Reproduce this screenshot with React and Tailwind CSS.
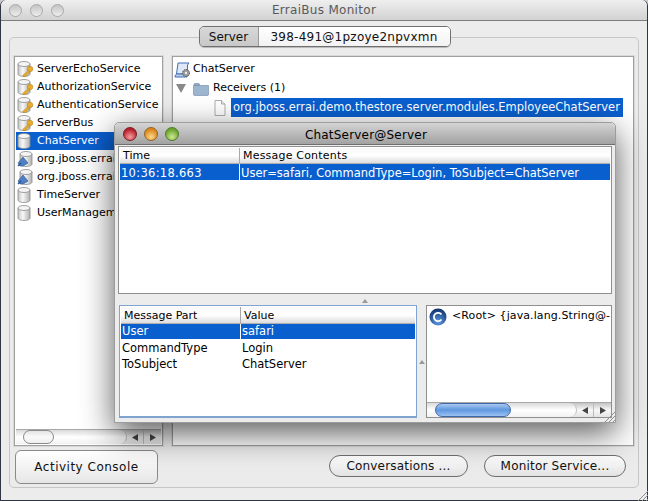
import React from "react";

const FONT = "font-['DejaVu_Sans',sans-serif]";

const services = [
  { name: "ServerEchoService", icon: "key" },
  { name: "AuthorizationService", icon: "key" },
  { name: "AuthenticationService", icon: "key" },
  { name: "ServerBus", icon: "key" },
  { name: "ChatServer", icon: "db", selected: true },
  { name: "org.jboss.errai.bus.client", icon: "plug" },
  { name: "org.jboss.errai.bus.server", icon: "plug" },
  { name: "TimeServer", icon: "db" },
  { name: "UserManagementService", icon: "db" },
];

function Cylinder() {
  return (
    <>
      <path d="M2 4v10c0 1.500 2.700 2.500 6 2.500s6-1 6-2.500V4z" fill="url(#cyl)" stroke="#8a8a8a" strokeWidth="0.8" />
      <ellipse cx="8" cy="4" rx="6" ry="2.500" fill="#f4f4f4" stroke="#8a8a8a" strokeWidth="0.8" />
    </>
  );
}

function ServiceIcon({ type }) {
  return (
    <svg width="18" height="18" viewBox="0 0 18 18" className="shrink-0">
      <defs>
        <linearGradient id="cyl" x1="0" x2="1" y1="0" y2="0">
          <stop offset="0" stopColor="#c4c4c4" />
          <stop offset="0.4" stopColor="#f8f8f8" />
          <stop offset="1" stopColor="#b0b0b0" />
        </linearGradient>
      </defs>
      {type === "plug" ? (
        <g transform="translate(2 0)">
          <Cylinder />
          <path d="M0 13l5-6 5 6-3 2-2 1H2z" fill="#4f7fc4" stroke="#2c558f" strokeWidth="0.6" />
          <path d="M0 16l3-3" stroke="#2c558f" strokeWidth="1.500" />
        </g>
      ) : (
        <Cylinder />
      )}
      {type === "key" && (
        <g fill="#e8ad2e" stroke="#b07a10" strokeWidth="0.5">
          <circle cx="14" cy="9" r="2.800" />
          <path d="M12.500 10.500l-6 5 1.500 1.500 1.200-1 .8.600 1-1-.5-.8 3.500-3z" />
        </g>
      )}
    </svg>
  );
}

function ScrollIcon() {
  return (
    <svg width="18" height="18" viewBox="0 0 18 18" className="shrink-0">
      <path d="M4 2h11l-1.500 2v9H2.500z" fill="#dfe8f6" stroke="#3f6fb5" strokeWidth="1" />
      <path d="M1 16c0-2 1-3 2-3h8c1 0 2 1 2 3z" fill="#b9cdea" stroke="#3f6fb5" strokeWidth="1" />
      <circle cx="12" cy="12" r="3.500" fill="#9a9a9a" stroke="#555" strokeWidth="1" strokeDasharray="1.500 0.800" />
      <circle cx="12" cy="12" r="1.200" fill="#eee" />
    </svg>
  );
}

function FolderIcon() {
  return (
    <svg width="16" height="14" viewBox="0 0 16 14" className="shrink-0">
      <path d="M1 3.500V2.500C1 2 1.500 1.500 2 1.500h4l1 2z" fill="#8fa9c4" stroke="#6e8aa6" strokeWidth="0.6" />
      <path d="M.5 3.500h15v9c0 .5-.4 1-1 1h-13c-.6 0-1-.5-1-1z" fill="#9db6d0" stroke="#6e8aa6" strokeWidth="0.6" />
    </svg>
  );
}

function DocIcon() {
  return (
    <svg width="12" height="16" viewBox="0 0 12 16" className="shrink-0">
      <path d="M1 .5h6.500L11 4v11.500H1z" fill="#fff" stroke="#9a9a9a" strokeWidth="0.8" />
      <path d="M7.500 .5V4H11" fill="#eee" stroke="#9a9a9a" strokeWidth="0.8" />
    </svg>
  );
}

function ArrowButtons() {
  return (
    <div className="flex h-full shrink-0">
      <div className="w-[17px] flex items-center justify-center border-r border-[#bdbdbd]">
        <svg width="6" height="7" viewBox="0 0 6 7"><path d="M6 0v7L0 3.500z" fill="#444" /></svg>
      </div>
      <div className="w-[17px] flex items-center justify-center">
        <svg width="6" height="7" viewBox="0 0 6 7"><path d="M0 0v7l6-3.500z" fill="#444" /></svg>
      </div>
    </div>
  );
}

function Scrollbar({ active, thumb }) {
  return (
    <div className="h-[15px] shrink-0 flex bg-gradient-to-b from-[#c4c4c4] via-[#f8f8f8] to-[#e4e4e4] border-t border-[#a8a8a8]">
      <div className={`flex-1 rounded-r-full bg-gradient-to-b from-[#dadada] via-white to-[#f2f2f2] border-r border-[#c0c0c0] ${active ? "pl-[8px]" : "pl-[7px]"}`}>
        <div
          className={
            active
              ? `${thumb} h-[14px] rounded-full border border-[#3e68a8] bg-gradient-to-b from-[#a9c8ee] via-[#5f97e0] to-[#9cc2f0]`
              : `${thumb} h-[14px] rounded-full border border-[#8a8a8a] bg-gradient-to-b from-[#e4e4e4] via-[#fafafa] to-[#eeeeee]`
          }
        />
      </div>
      <ArrowButtons />
    </div>
  );
}

function Grip() {
  return (
    <svg width="11" height="11" viewBox="0 0 11 11" className="absolute right-0 bottom-0">
      <path d="M11 1L1 11M11 5L5 11M11 9L9 11" stroke="#8f8f8f" strokeWidth="1" />
    </svg>
  );
}

function Light({ className }) {
  return <div className={`w-[14px] h-[14px] rounded-full shrink-0 ${className}`} />;
}

function HeaderCell({ className, children }) {
  return <div className={`flex items-center h-full pt-[2px] text-[11px] text-black ${className}`}>{children}</div>;
}

function PillButton({ className, children }) {
  return (
    <button className={`h-[22px] mb-[7px] rounded-full border border-[#6f6f6f] bg-gradient-to-b from-white via-[#f1f1f1] to-[#e2e2e2] text-[12px] text-[#111] tracking-[0.2px] ${className}`}>
      {children}
    </button>
  );
}

function ChatWindow() {
  return (
    <div className="absolute left-[114px] top-[122px] w-[502px] h-[301px] flex flex-col bg-[#ececec] rounded-t-[5px] border border-[#9c9c9c] shadow-[0_10px_32px_rgba(0,0,0,0.65)]">
      <div className="relative h-[22px] shrink-0 flex items-center gap-[7px] pl-[8px] rounded-t-[5px] bg-gradient-to-b from-[#d4d4d4] to-[#a2a2a2] border-b border-[#6f6f6f]">
        <Light className="bg-[radial-gradient(circle_at_50%_75%,#f6a0a0,#b81f2c_70%)] border border-[#7a1a20]" />
        <Light className="bg-[radial-gradient(circle_at_50%_75%,#fbd98a,#d9861c_70%)] border border-[#94621c]" />
        <Light className="bg-[radial-gradient(circle_at_50%_75%,#cfeb92,#69a32e_70%)] border border-[#4f7a24]" />
        <span className="absolute inset-0 flex items-center justify-center text-[12px] text-black tracking-[0.2px] pl-[2px] pt-[2px]">ChatServer@Server</span>
      </div>

      <div className="flex-1 flex flex-col px-[3px] pt-[1px] pb-[4px]">
        <div className="h-[148px] shrink-0 bg-white border border-[#8f8f8f] p-px">
          <div className="h-[16px] flex bg-gradient-to-b from-[#f8f8f8] via-white to-[#dcdcdc] border-b border-[#b0b0b0]">
            <HeaderCell className="w-[120px] pl-[3px] border-r border-[#a8a8a8]">Time</HeaderCell>
            <HeaderCell className="flex-1 pl-[3px] tracking-[0.2px]">Message Contents</HeaderCell>
          </div>
          <div className="h-[16px] flex bg-[#0a5fcf] text-white text-[11.500px] leading-[18px]">
            <div className="w-[120px] pl-[1px] border-r border-white tracking-[0.3px]">10:36:18.663</div>
            <div className="flex-1 pl-[1px] whitespace-nowrap">User=safari, CommandType=Login, ToSubject=ChatServer</div>
          </div>
        </div>

        <div className="h-[11px] shrink-0 flex items-center justify-center pt-[2px]">
          <svg width="6" height="4" viewBox="0 0 6 4"><path d="M0 4l3-4 3 4z" fill="#999" /></svg>
        </div>

        <div className="flex-1 flex">
          <div className="w-[298px] ml-[1px] shrink-0 bg-white border border-[#7fa4d0] border-b-2 p-px text-[11.500px]">
            <div className="h-[17px] flex bg-gradient-to-b from-[#f8f8f8] via-white to-[#dcdcdc] border-b border-[#b0b0b0]">
              <HeaderCell className="w-[120px] pl-[3px] border-r border-[#a8a8a8]">Message Part</HeaderCell>
              <HeaderCell className="flex-1 pl-[3px]">Value</HeaderCell>
            </div>
            <div className="h-[15px] flex bg-[#0a5fcf] text-white leading-[15px]">
              <div className="w-[120px] pl-[1px] border-r border-white">User</div>
              <div className="flex-1 pl-[1px]">safari</div>
            </div>
            <div className="h-[16px] flex text-black leading-[16px] mt-px">
              <div className="w-[120px] pl-[1px]">CommandType</div>
              <div className="flex-1 pl-[1px]">Login</div>
            </div>
            <div className="h-[16px] flex text-black leading-[16px]">
              <div className="w-[120px] pl-[1px]">ToSubject</div>
              <div className="flex-1 pl-[1px]">ChatServer</div>
            </div>
          </div>

          <div className="w-[9px] shrink-0 flex items-center justify-center">
            <svg width="6" height="4" viewBox="0 0 6 4"><path d="M0 4l3-4 3 4z" fill="#999" /></svg>
          </div>

          <div className="flex-1 flex flex-col bg-white border border-[#8f8f8f]">
            <div className="flex-1 flex items-start gap-[5px] pl-[2px] pt-[2px] overflow-hidden whitespace-nowrap">
              <svg width="18" height="18" viewBox="0 0 18 18" className="shrink-0">
                <defs>
                  <radialGradient id="cball" cx="0.5" cy="0.8" r="0.8">
                    <stop offset="0" stopColor="#5d9be6" />
                    <stop offset="1" stopColor="#0c2f66" />
                  </radialGradient>
                </defs>
                <circle cx="9" cy="9" r="8.500" fill="url(#cball)" />
                <path d="M12.500 6.500A4.200 4.200 0 1 0 12.500 11.500" fill="none" stroke="#fff" strokeWidth="1.800" />
              </svg>
              <span className="text-[11px] leading-[16px] text-black tracking-[0.1px]">&lt;Root&gt; {"{java.lang.String@-"}</span>
            </div>
            <Scrollbar active thumb="w-[76px]" />
          </div>
        </div>
      </div>
      <Grip />
    </div>
  );
}

export default function App() {
  return (
    <div className={`${FONT} relative w-[648px] h-[501px] overflow-hidden bg-[#c8c8c8]`}>
      <div className="h-full flex flex-col bg-[#ececec] rounded-t-[6px] border-x border-b border-[#2f3542]">
        <div className="relative h-[21px] shrink-0 flex items-center gap-[8px] pl-[8px] rounded-t-[6px] bg-gradient-to-b from-[#efefef] to-[#d2d2d2] border-b border-[#7d7d7d]">
          <div className="w-[13px] h-[13px] rounded-full border border-[#a8a8a8] bg-gradient-to-b from-[#c4c4c4] to-[#eeeeee]" />
          <div className="w-[13px] h-[13px] rounded-full border border-[#a8a8a8] bg-gradient-to-b from-[#c4c4c4] to-[#eeeeee]" />
          <div className="w-[13px] h-[13px] rounded-full border border-[#a8a8a8] bg-gradient-to-b from-[#c4c4c4] to-[#eeeeee]" />
          <span className="absolute inset-0 flex items-center justify-center text-[12px] text-[#5a5a5a] tracking-[0.3px]">ErraiBus Monitor</span>
        </div>

        <div className="flex-1 flex flex-col px-[8px] pt-[5px] pb-[12px]">
          <div className="relative z-10 h-[21px] shrink-0 self-center flex ml-[1px] -mb-[10px] rounded-[5px] border border-[#6f6f6f] overflow-hidden text-[12px] text-[#111] shadow-[0_1px_0_#bbb]">
            <div className="w-[59px] flex items-center justify-center bg-gradient-to-b from-[#d8d8d8] to-[#c8c8c8] border-r border-[#9a9a9a]">Server</div>
            <div className="w-[191px] flex items-center justify-center bg-gradient-to-b from-white to-[#f2f2f2] tracking-[0.25px]">398-491@1pzoye2npvxmn</div>
          </div>

          <div className="flex-1 flex flex-col rounded-[5px] border border-[#c6c6c6] bg-[#ebebeb] px-[4px] pt-[18px] pb-[3px]">
            <div className="h-[390px] shrink-0 flex gap-[9px]">
              <div className="w-[149px] shrink-0 flex flex-col border border-[#a0a0a0] bg-white p-px outline-1 outline-[#d8d8d8]">
                <div className="flex-1 overflow-hidden text-[11px] pt-[2px]">
                  {services.map((s) => (
                    <div key={s.name} className={`h-[18px] flex items-center gap-[3px] whitespace-nowrap ${s.selected ? "bg-[#0a5fcf] text-white" : "text-black"}`}>
                      <ServiceIcon type={s.icon} />
                      <span>{s.name}</span>
                    </div>
                  ))}
                </div>
                <Scrollbar thumb="w-[31px]" />
              </div>

              <div className="flex-1 border border-[#a0a0a0] bg-white text-[11px] text-black pt-[3px] outline-1 outline-[#d8d8d8]">
                <div className="h-[19px] flex items-center gap-[1px] pl-[1px]">
                  <ScrollIcon />
                  <span>ChatServer</span>
                </div>
                <div className="h-[19px] flex items-center pl-[3px]">
                  <svg width="10" height="9" viewBox="0 0 10 9" className="shrink-0"><path d="M0 0h10L5 9z" fill="#8a8a8a" /></svg>
                  <div className="w-[7px]" />
                  <FolderIcon />
                  <span className="ml-[4px]">Receivers (1)</span>
                </div>
                <div className="h-[19px] flex items-center pl-[41px]">
                  <DocIcon />
                  <span className="ml-[5px] h-[19px] w-[392px] pl-[2px] leading-[19px] bg-[#0a5fcf] text-white text-[11.500px] whitespace-nowrap">org.jboss.errai.demo.thestore.server.modules.EmployeeChatServer</span>
                </div>
              </div>
            </div>

            <div className="flex-1 flex items-end pl-px pr-[8px]">
              <button className="w-[143px] h-[34px] rounded-[6px] border border-[#8a8a8a] bg-gradient-to-b from-white via-[#f3f3f3] to-[#e6e6e6] text-[12px] text-[#111] tracking-[0.5px]">Activity Console</button>
              <div className="flex-1" />
              <PillButton className="w-[139px]">Conversations ...</PillButton>
              <PillButton className="w-[142px] ml-[16px]">Monitor Service...</PillButton>
            </div>
          </div>
        </div>
        <Grip />
      </div>
      <ChatWindow />
    </div>
  );
}
